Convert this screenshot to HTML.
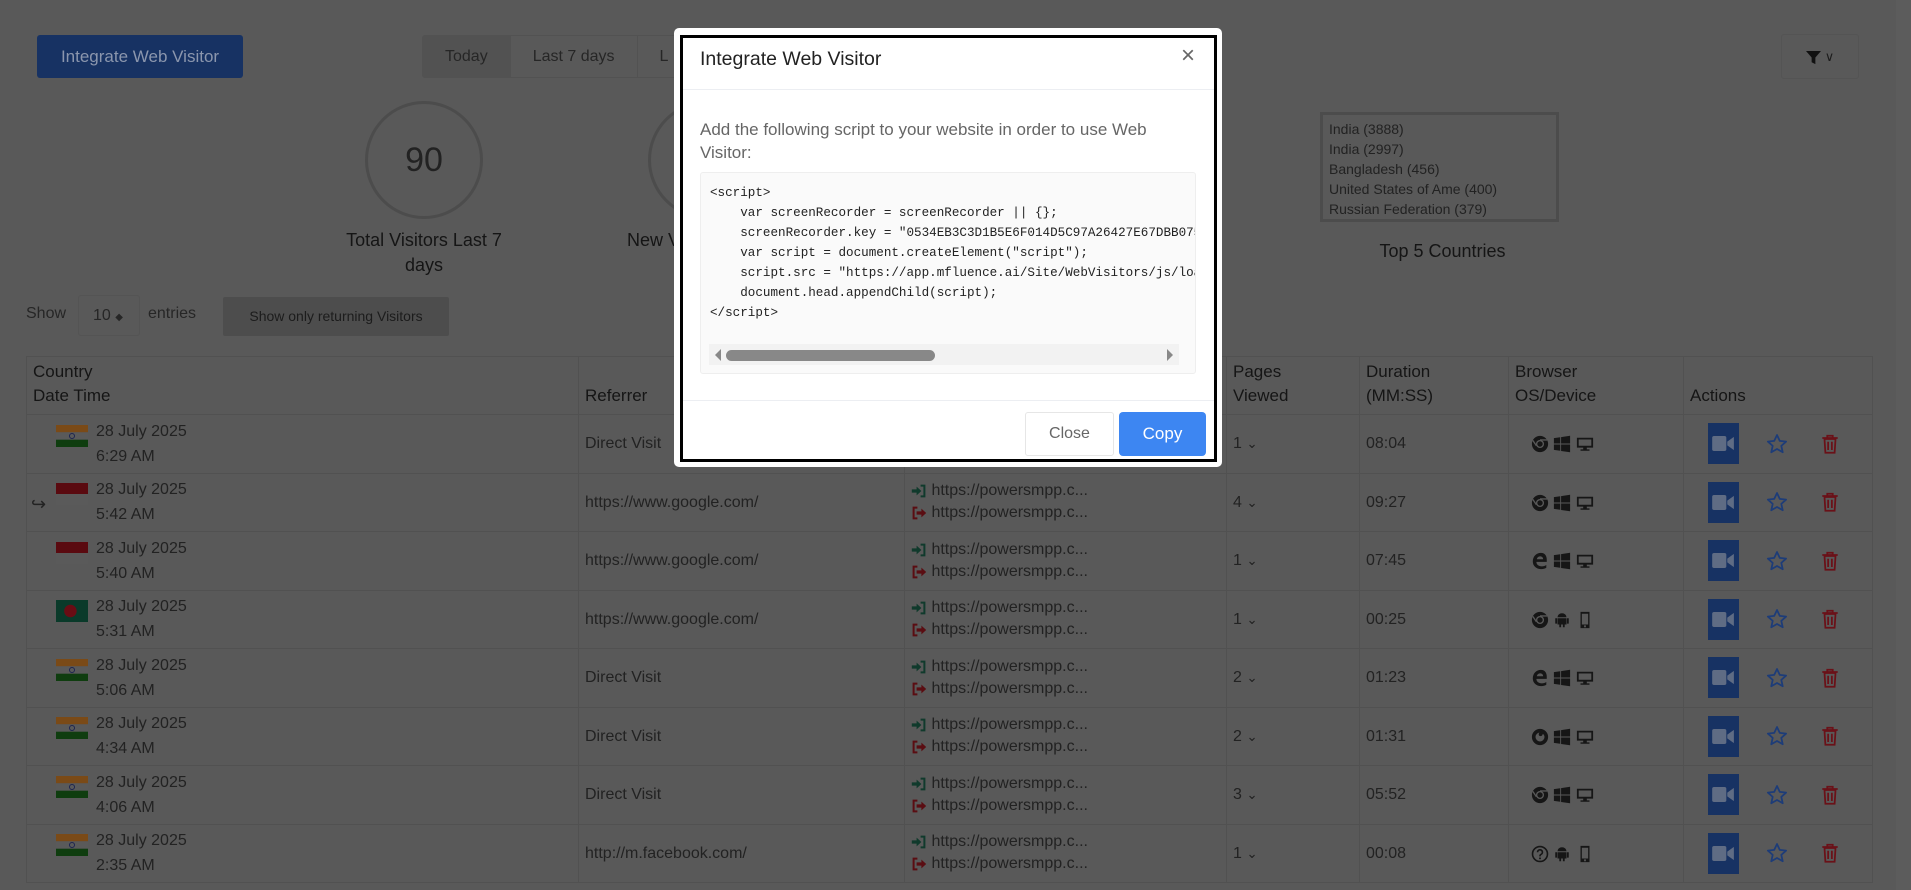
<!DOCTYPE html>
<html><head><meta charset="utf-8"><style>
*{box-sizing:border-box;margin:0;padding:0}
body{width:1911px;height:890px;overflow:hidden;background:#595959;font-family:"Liberation Sans",sans-serif;color:#1c1c1c;position:relative}
.a{position:absolute}
.btnInt{left:37px;top:35px;width:206px;height:43px;background:#173263;border-radius:3px;color:#8b96ad;font-size:17px;line-height:43px;text-align:center}
.tabs{left:422px;top:35px;height:43px;display:flex;border:1px solid #525252;border-radius:3px}
.tabs div{padding:0 22px;line-height:41px;font-size:16px;color:#262626;border-right:1px solid #525252}
.circle{width:118px;height:118px;border:3px solid #4c4c4c;border-radius:50%;text-align:center;line-height:112px;font-size:34px;color:#222}
.lbl{font-size:18px;text-align:center;color:#151515;line-height:25px}
table{position:absolute;left:26px;top:356px;border-collapse:collapse;font-size:16px}
td,th{border:1px solid #515151;vertical-align:middle;text-align:left;padding:0 6px}
th{font-weight:normal;font-size:17px;color:#151515;vertical-align:bottom;padding-bottom:6px;line-height:24px;height:58px}
td{height:58.5px;color:#222;line-height:25px}
.flag{display:inline-block;width:32px;height:22px;vertical-align:top;margin:6px 8px 0 29px;position:relative}
.dt{display:inline-block;vertical-align:top}
.ic{width:18px;height:18px;vertical-align:middle;fill:#161616}
.vid{display:inline-block;width:31px;height:41px;background:#173263;vertical-align:middle;position:relative}
.vid svg{position:absolute;left:4px;top:12px}
.pg{font-size:16px;line-height:22px}
</style></head><body>
<svg width="0" height="0" style="position:absolute">
<defs>
<symbol id="chrome" viewBox="0 0 20 20"><circle cx="10" cy="10" r="9"/><circle cx="10" cy="10" r="4.5" fill="#595959"/><circle cx="10" cy="10" r="3" /><path d="M10 5.5h8" stroke="#595959" stroke-width="1.5"/><path d="M6 12l-4 -6" stroke="#595959" stroke-width="1.5"/></symbol>
<symbol id="win" viewBox="0 0 20 20"><path d="M1 3.5l7-1v7H1zM9 2.3l10-1.5v8.7H9zM1 10.5h7v7l-7-1zM9 10.5h10v8.7l-10-1.4z"/></symbol>
<symbol id="desk" viewBox="0 0 20 20"><path d="M1 3h18v11H1z M3 5v7h14V5z M8 14h4v2h3v1.5H5V16h3z" fill-rule="evenodd"/></symbol>
<symbol id="edge" viewBox="0 0 20 20"><path d="M17 11H6c0 3 2.5 5 6 5 2 0 3.5-.5 5-1.5v3c-1.5 1-3.5 1.5-5.5 1.5C6 19 2 15.5 2 10.5 2 5 6 1 11 1c4.5 0 6.5 3.5 6.5 7.5V11zM6.5 8h7c0-2-1.5-3.2-3.3-3.2S6.8 6 6.5 8z"/></symbol>
<symbol id="ff" viewBox="0 0 20 20"><circle cx="10" cy="10" r="9"/><path d="M10 5a5 5 0 1 0 5 5c0-2-1-3-2-3.5 0 1.5-1 2.5-2.5 2.5S8 8 9 5z" fill="#595959"/></symbol>
<symbol id="andr" viewBox="0 0 20 20"><path d="M5 7a5 4.5 0 0 1 10 0zM5 8h10v7H5zM7 15h2v3H7zM11 15h2v3h-2zM2.5 8h2v6h-2zM15.5 8h2v6h-2z"/></symbol>
<symbol id="mob" viewBox="0 0 20 20"><path d="M5 1h10v18H5z M6.5 3v12h7V3z M9 16h2v2H9z" fill-rule="evenodd"/></symbol>
<symbol id="q" viewBox="0 0 20 20"><circle cx="10" cy="10" r="8.3" fill="none" stroke="#161616" stroke-width="1.8"/><path d="M7.3 8a2.7 2.7 0 1 1 3.7 2.5c-.7.3-1 .8-1 1.5v.6" fill="none" stroke="#161616" stroke-width="1.8"/><circle cx="10" cy="14.8" r="1.1"/></symbol>
<symbol id="star" viewBox="0 0 20 20"><path d="M10 1.8l2.5 5.4 5.8.6-4.4 3.9 1.3 5.8L10 14.5l-5.2 3 1.3-5.8L1.7 7.8l5.8-.6z" fill="none" stroke="#1d3c78" stroke-width="1.6" stroke-linejoin="round"/></symbol>
<symbol id="trash" viewBox="0 0 20 20"><path d="M7.5 2.5h5v2h-5zM3 4.5h14M5 5.5h10l-.8 12.5H5.8zM8.3 8v7.5M11.7 8v7.5" fill="none" stroke="#6a1118" stroke-width="1.6"/></symbol>
<symbol id="in" viewBox="0 0 20 20"><path d="M1 8h6V4.5l6 5.5-6 5.5V12H1zM12 2h6v16h-6v-2.5h3.5v-11H12z" fill="#103a2c"/></symbol>
<symbol id="out" viewBox="0 0 20 20"><path d="M2 2h6v2.5H4.5v11H8V18H2zM7 8h6V4.5l6 5.5-6 5.5V12H7z" fill="#5a0d12"/></symbol>
<symbol id="cam" viewBox="0 0 24 18"><rect x="0" y="1" width="15" height="16" rx="2" fill="#5f6c84"/><path d="M16 7l7-5v14l-7-5z" fill="#5f6c84"/></symbol>
<symbol id="india" viewBox="0 0 32 22"><rect width="32" height="7.3" fill="#7a4a17"/><rect y="7.3" width="32" height="7.4" fill="#5a5a5a"/><rect y="14.7" width="32" height="7.3" fill="#0f3d0f"/><circle cx="16" cy="11" r="2.5" fill="none" stroke="#1d2450" stroke-width="1"/></symbol>
</defs></svg>

<div class="a btnInt">Integrate Web Visitor</div>
<div class="a tabs"><div style="background:#525252">Today</div><div>Last 7 days</div><div style="border:none">L</div></div>
<div class="a" style="left:1781px;top:34px;width:78px;height:45px;border:1px solid #545454;border-radius:3px;text-align:center;line-height:43px;font-size:14px;color:#1c1c1c"><svg width="15" height="15" viewBox="0 0 16 16" style="vertical-align:middle"><path d="M0 1h16L10 8v7l-4-2V8z" fill="#111"/></svg> <span style="font-size:13px">&#8744;</span></div>

<div class="a circle" style="left:365px;top:101px">90</div>
<div class="a lbl" style="left:324px;top:228px;width:200px">Total Visitors Last 7<br>days</div>
<div class="a circle" style="left:648px;top:101px"></div>
<div class="a lbl" style="left:627px;top:228px">New V</div>

<div class="a" style="left:1320px;top:112px;width:239px;height:110px;border:3px solid #4c4c4c;padding:4px 6px;font-size:14px;line-height:20px;color:#222">India (3888)<br>India (2997)<br>Bangladesh (456)<br>United States of Ame (400)<br>Russian Federation (379)</div>
<div class="a lbl" style="left:1320px;top:239px;width:245px">Top 5 Countries</div>

<div class="a" style="left:26px;top:305px;font-size:16px;color:#262626">Show</div>
<div class="a" style="left:78px;top:295px;width:62px;height:41px;border:1px solid #545454;border-radius:3px;font-size:16px;line-height:39px;padding-left:14px;color:#262626">10 <span style="font-size:10px">&#9670;</span></div>
<div class="a" style="left:148px;top:305px;font-size:16px;color:#262626">entries</div>
<div class="a" style="left:223px;top:297px;width:226px;height:39px;background:#4d4d4d;border-radius:2px;font-size:14px;line-height:39px;text-align:center;color:#1c1c1c">Show only returning Visitors</div>
<div class="a" style="left:1896px;top:0;width:15px;height:890px;background:#5c5c5c"></div>

<table>
<tr><th style="width:552px">Country<br>Date Time</th><th style="width:326px">Referrer</th><th style="width:322px"></th><th style="width:133px">Pages<br>Viewed</th><th style="width:149px">Duration<br>(MM:SS)</th><th style="width:175px">Browser<br>OS/Device</th><th style="width:189px">Actions</th></tr>
</table>

<table style="top:414px" id="t">
<tr><td style="width:552px;padding:0"><svg class="flag"><use href="#india"/></svg><span class="dt">28 July 2025<br>6:29 AM</span></td><td style="width:326px">Direct Visit</td><td style="width:322px"></td><td style="width:133px">1 <small>&#8964;</small></td><td style="width:149px">08:04</td><td style="width:175px;padding-left:22px"><svg class="ic"><use href="#chrome"/></svg> <svg class="ic"><use href="#win"/></svg> <svg class="ic"><use href="#desk"/></svg></td><td style="width:189px;padding-left:24px"><span class="vid"><svg width="23" height="17"><use href="#cam"/></svg></span><svg class="ic" style="width:22px;height:22px;margin-left:27px"><use href="#star"/></svg><svg class="ic" style="width:22px;height:22px;margin-left:31px"><use href="#trash"/></svg></td></tr>
<tr><td style="padding:0;position:relative"><span style="position:absolute;left:4px;top:18px;font-size:18px">&#8618;</span><span class="flag" style="background:linear-gradient(#5a0a10 0 50%,#5a5a5a 50%)"></span><span class="dt">28 July 2025<br>5:42 AM</span></td><td>https://www.google.com/</td><td class="pg"><svg class="ic" style="width:16px;height:16px"><use href="#in"/></svg> https://powersmpp.c...<br><svg class="ic" style="width:16px;height:16px"><use href="#out"/></svg> https://powersmpp.c...</td><td>4 <small>&#8964;</small></td><td>09:27</td><td style="padding-left:22px"><svg class="ic"><use href="#chrome"/></svg> <svg class="ic"><use href="#win"/></svg> <svg class="ic"><use href="#desk"/></svg></td><td style="padding-left:24px"><span class="vid"><svg width="23" height="17"><use href="#cam"/></svg></span><svg class="ic" style="width:22px;height:22px;margin-left:27px"><use href="#star"/></svg><svg class="ic" style="width:22px;height:22px;margin-left:31px"><use href="#trash"/></svg></td></tr>
<tr><td style="padding:0"><span class="flag" style="background:linear-gradient(#5a0a10 0 50%,#5a5a5a 50%)"></span><span class="dt">28 July 2025<br>5:40 AM</span></td><td>https://www.google.com/</td><td class="pg"><svg class="ic" style="width:16px;height:16px"><use href="#in"/></svg> https://powersmpp.c...<br><svg class="ic" style="width:16px;height:16px"><use href="#out"/></svg> https://powersmpp.c...</td><td>1 <small>&#8964;</small></td><td>07:45</td><td style="padding-left:22px"><svg class="ic"><use href="#edge"/></svg> <svg class="ic"><use href="#win"/></svg> <svg class="ic"><use href="#desk"/></svg></td><td style="padding-left:24px"><span class="vid"><svg width="23" height="17"><use href="#cam"/></svg></span><svg class="ic" style="width:22px;height:22px;margin-left:27px"><use href="#star"/></svg><svg class="ic" style="width:22px;height:22px;margin-left:31px"><use href="#trash"/></svg></td></tr>
<tr><td style="padding:0"><span class="flag" style="background:radial-gradient(circle at 45% 50%,#6a0c14 0 6px,#0a3a2a 6.5px)"></span><span class="dt">28 July 2025<br>5:31 AM</span></td><td>https://www.google.com/</td><td class="pg"><svg class="ic" style="width:16px;height:16px"><use href="#in"/></svg> https://powersmpp.c...<br><svg class="ic" style="width:16px;height:16px"><use href="#out"/></svg> https://powersmpp.c...</td><td>1 <small>&#8964;</small></td><td>00:25</td><td style="padding-left:22px"><svg class="ic"><use href="#chrome"/></svg> <svg class="ic"><use href="#andr"/></svg> <svg class="ic"><use href="#mob"/></svg></td><td style="padding-left:24px"><span class="vid"><svg width="23" height="17"><use href="#cam"/></svg></span><svg class="ic" style="width:22px;height:22px;margin-left:27px"><use href="#star"/></svg><svg class="ic" style="width:22px;height:22px;margin-left:31px"><use href="#trash"/></svg></td></tr>
<tr><td style="padding:0"><svg class="flag"><use href="#india"/></svg><span class="dt">28 July 2025<br>5:06 AM</span></td><td>Direct Visit</td><td class="pg"><svg class="ic" style="width:16px;height:16px"><use href="#in"/></svg> https://powersmpp.c...<br><svg class="ic" style="width:16px;height:16px"><use href="#out"/></svg> https://powersmpp.c...</td><td>2 <small>&#8964;</small></td><td>01:23</td><td style="padding-left:22px"><svg class="ic"><use href="#edge"/></svg> <svg class="ic"><use href="#win"/></svg> <svg class="ic"><use href="#desk"/></svg></td><td style="padding-left:24px"><span class="vid"><svg width="23" height="17"><use href="#cam"/></svg></span><svg class="ic" style="width:22px;height:22px;margin-left:27px"><use href="#star"/></svg><svg class="ic" style="width:22px;height:22px;margin-left:31px"><use href="#trash"/></svg></td></tr>
<tr><td style="padding:0"><svg class="flag"><use href="#india"/></svg><span class="dt">28 July 2025<br>4:34 AM</span></td><td>Direct Visit</td><td class="pg"><svg class="ic" style="width:16px;height:16px"><use href="#in"/></svg> https://powersmpp.c...<br><svg class="ic" style="width:16px;height:16px"><use href="#out"/></svg> https://powersmpp.c...</td><td>2 <small>&#8964;</small></td><td>01:31</td><td style="padding-left:22px"><svg class="ic"><use href="#ff"/></svg> <svg class="ic"><use href="#win"/></svg> <svg class="ic"><use href="#desk"/></svg></td><td style="padding-left:24px"><span class="vid"><svg width="23" height="17"><use href="#cam"/></svg></span><svg class="ic" style="width:22px;height:22px;margin-left:27px"><use href="#star"/></svg><svg class="ic" style="width:22px;height:22px;margin-left:31px"><use href="#trash"/></svg></td></tr>
<tr><td style="padding:0"><svg class="flag"><use href="#india"/></svg><span class="dt">28 July 2025<br>4:06 AM</span></td><td>Direct Visit</td><td class="pg"><svg class="ic" style="width:16px;height:16px"><use href="#in"/></svg> https://powersmpp.c...<br><svg class="ic" style="width:16px;height:16px"><use href="#out"/></svg> https://powersmpp.c...</td><td>3 <small>&#8964;</small></td><td>05:52</td><td style="padding-left:22px"><svg class="ic"><use href="#chrome"/></svg> <svg class="ic"><use href="#win"/></svg> <svg class="ic"><use href="#desk"/></svg></td><td style="padding-left:24px"><span class="vid"><svg width="23" height="17"><use href="#cam"/></svg></span><svg class="ic" style="width:22px;height:22px;margin-left:27px"><use href="#star"/></svg><svg class="ic" style="width:22px;height:22px;margin-left:31px"><use href="#trash"/></svg></td></tr>
<tr><td style="padding:0"><svg class="flag"><use href="#india"/></svg><span class="dt">28 July 2025<br>2:35 AM</span></td><td>http://m.facebook.com/</td><td class="pg"><svg class="ic" style="width:16px;height:16px"><use href="#in"/></svg> https://powersmpp.c...<br><svg class="ic" style="width:16px;height:16px"><use href="#out"/></svg> https://powersmpp.c...</td><td>1 <small>&#8964;</small></td><td>00:08</td><td style="padding-left:22px"><svg class="ic"><use href="#q"/></svg> <svg class="ic"><use href="#andr"/></svg> <svg class="ic"><use href="#mob"/></svg></td><td style="padding-left:24px"><span class="vid"><svg width="23" height="17"><use href="#cam"/></svg></span><svg class="ic" style="width:22px;height:22px;margin-left:27px"><use href="#star"/></svg><svg class="ic" style="width:22px;height:22px;margin-left:31px"><use href="#trash"/></svg></td></tr>
</table>

<!-- modal -->
<div class="a" style="left:674px;top:28px;width:548px;height:439px;background:#fff;border-radius:5px"></div>
<div class="a" style="left:680px;top:35px;width:537px;height:427px;border:3px solid #000;background:#fff">
  <div class="a" style="left:17px;top:10px;font-size:19.5px;color:#222">Integrate Web Visitor</div>
  <div class="a" style="left:498px;top:4px;font-size:24px;color:#666;font-weight:300">&#215;</div>
  <div class="a" style="left:0;top:51px;width:531px;border-top:1px solid #eceef2"></div>
  <div class="a" style="left:17px;top:80px;width:500px;font-size:17px;line-height:23px;color:#666">Add the following script to your website in order to use Web Visitor:</div>
  <div class="a" style="left:17px;top:134px;width:496px;height:202px;background:#fafafa;border:1px solid #eeeeee;border-radius:3px;overflow:hidden">
    <pre style="position:absolute;left:9px;top:10px;font-family:'Liberation Mono','DejaVu Sans Mono',monospace;font-size:12.6px;line-height:20px;color:#222;white-space:pre">&lt;script&gt;
    var screenRecorder = screenRecorder || {};
    screenRecorder.key = "0534EB3C3D1B5E6F014D5C97A26427E67DBB075
    var script = document.createElement("script");
    script.src = "https://app.mfluence.ai/Site/WebVisitors/js/loa
    document.head.appendChild(script);
&lt;/script&gt;</pre>
    <div class="a" style="left:8px;top:171px;width:470px;height:21px;background:#f2f2f2"></div>
    <div class="a" style="left:14px;top:176px;width:0;height:0;border-top:6px solid transparent;border-bottom:6px solid transparent;border-right:6px solid #888"></div>
    <div class="a" style="left:466px;top:176px;width:0;height:0;border-top:6px solid transparent;border-bottom:6px solid transparent;border-left:6px solid #888"></div>
    <div class="a" style="left:25px;top:177px;width:209px;height:11px;background:#888;border-radius:6px"></div>
  </div>
  <div class="a" style="left:0;top:362px;width:531px;border-top:1px solid #eceef2"></div>
  <div class="a" style="left:342px;top:374px;width:89px;height:44px;border:1px solid #e6e6e6;border-radius:3px;font-size:16px;line-height:42px;text-align:center;color:#666">Close</div>
  <div class="a" style="left:436px;top:374px;width:87px;height:44px;background:#3d86f2;border-radius:4px;font-size:17px;line-height:44px;text-align:center;color:#fff">Copy</div>
</div>
</body></html>
